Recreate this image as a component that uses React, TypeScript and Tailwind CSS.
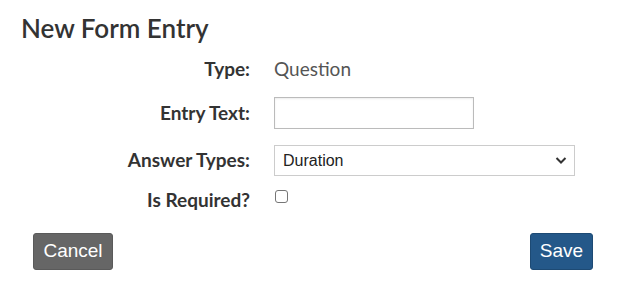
import React from 'react';

export default function App() {
  return (
    <div className="w-[620px] h-[291px] bg-white font-['Lato',sans-serif] text-[#333]">
      <h1 className="pl-[21px] pt-[12px] text-[26px] leading-[32px] font-semibold text-[#333]">
        New Form Entry
      </h1>

      <div className="mt-[13px] flex flex-col">
        <div className="flex items-center h-[24px]">
          <label className="w-[250px] text-right text-[19px] font-bold">Type:</label>
          <span className="ml-[24px] text-[19px] text-[#555]">Question</span>
        </div>

        <div className="mt-[16px] flex items-center h-[32px]">
          <label className="w-[250px] text-right text-[19px] font-bold">Entry Text:</label>
          <input
            type="text"
            className="ml-[24px] w-[200px] h-[32px] border border-[#bbb] shadow-[inset_0_1px_2px_rgba(0,0,0,0.08)] px-2 outline-none"
          />
        </div>

        <div className="mt-[16px] flex items-center h-[31px]">
          <label className="w-[250px] text-right text-[19px] font-bold">Answer Types:</label>
          <div className="ml-[24px] relative w-[301px] h-[31px] border border-[#ccc] flex items-center">
            <span className="pl-[8px] font-['Liberation_Sans',Arial,sans-serif] text-[16px] text-[#222]">Duration</span>
            <svg
              className="absolute right-[7px] top-[10px]"
              width="12"
              height="9"
              viewBox="0 0 12 9"
              fill="none"
              stroke="#333"
              strokeWidth="2"
            >
              <path d="M1.5 2 L6 6.5 L10.5 2" />
            </svg>
          </div>
        </div>

        <div className="mt-[12px] flex items-center h-[24px]">
          <label className="w-[250px] text-right text-[19px] font-bold">Is Required?</label>
          <div className="ml-[25px] w-[13px] h-[13px] border border-[#767676] rounded-[3px] bg-white -mt-[7px]" />
        </div>
      </div>

      <div className="mt-[21px] flex justify-between pl-[33px] pr-[27px]">
        <button className="w-[80px] h-[37px] rounded-[3px] bg-[#666] border border-[#5a5a5a] text-white text-[19px] font-['Liberation_Sans',Arial,sans-serif]">
          Cancel
        </button>
        <button className="w-[63px] h-[37px] rounded-[3px] bg-[#245889] border border-[#1d4a74] text-white text-[19px] font-['Liberation_Sans',Arial,sans-serif]">
          Save
        </button>
      </div>
    </div>
  );
}
